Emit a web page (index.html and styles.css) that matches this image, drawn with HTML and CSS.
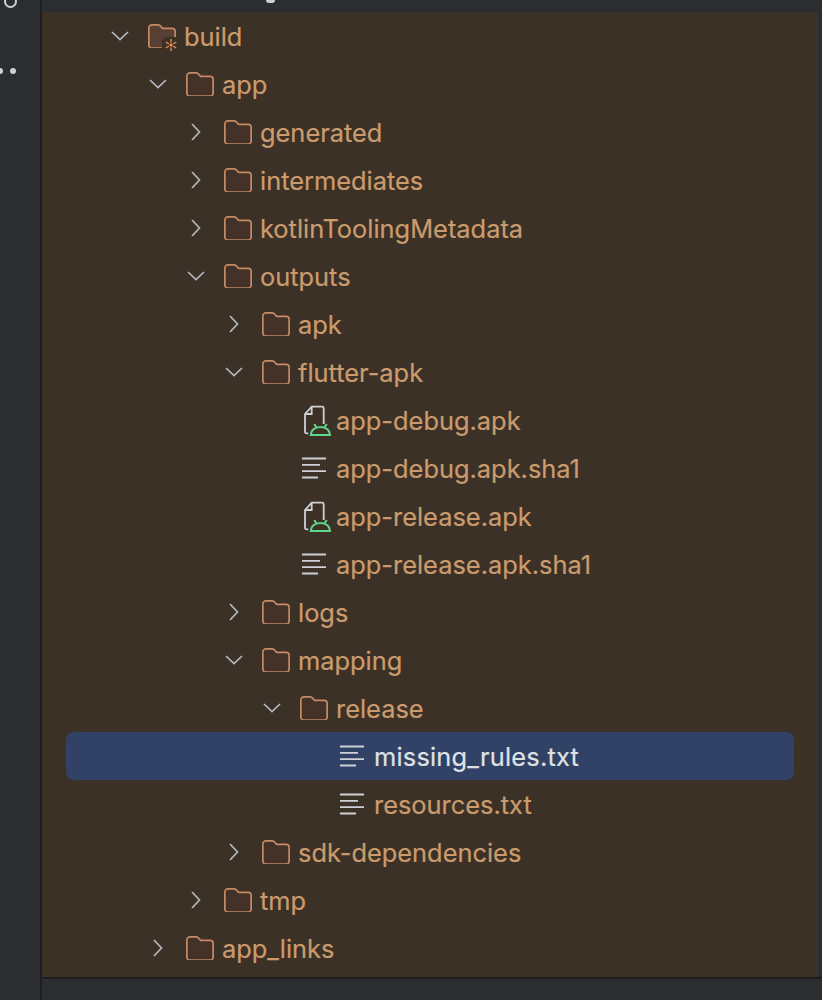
FILE: index.html
```html
<!DOCTYPE html>
<html lang="en">
<head>
<meta charset="utf-8">
<title>Project tree</title>
<link rel="stylesheet" href="styles.css">
</head>
<body>
<svg class="defs" width="0" height="0" aria-hidden="true">
  <defs>
    <symbol id="folder" viewBox="0 0 28 24"><path class="folder-shape" d="M.85 3.850a3 3 0 0 1 3-3h6.450a2 2 0 0 1 1.400.6l3 3h9.450a3 3 0 0 1 3 3v13.700a3 3 0 0 1-3 3H3.850a3 3 0 0 1-3-3z" stroke="#c58a66" stroke-width="1.700"/></symbol>
    <symbol id="down" viewBox="0 0 20 20"><path d="M2 6l8 7.500L18 6" fill="none" stroke="#b4b8bf" stroke-width="1.700"/></symbol>
    <symbol id="right" viewBox="0 0 20 20"><path d="M6 2l7.500 8L6 18" fill="none" stroke="#b4b8bf" stroke-width="1.700"/></symbol>
    <symbol id="text" viewBox="0 0 28 24"><path d="M2 2.500h24M2 8.800h18M2 15.200h24M2 21.500h16" fill="none" stroke="#ced0d6" stroke-width="1.800"/></symbol>
    <symbol id="apk" viewBox="0 0 32 32"><path d="M8.300 28.300H6.500a1.500 1.500 0 0 1-1.500-1.500V9l6.700-7.300h10.500a1.500 1.500 0 0 1 1.500 1.500V19M5 9h6.700V1.700" fill="none" stroke="#ced0d6" stroke-width="1.800"/><path d="M10.800 30h19.200c0-4.500-3.800-8-9.600-8s-9.600 3.500-9.600 8zM14.300 19l2.600 4.200M26.700 19l-2.700 4.200" fill="none" stroke="#5fd68a" stroke-width="2.100"/></symbol>
  </defs>
</svg>
<div class="window">
  <aside class="rail">
    <div class="rail-ring"></div>
    <div class="rail-dots"><span class="dot"></span><span class="dot"></span></div>
  </aside>
  <div class="main">
    <div class="topbar"><span class="descender"></span></div>
    <div class="tree">
      <div class="row l0"><svg class="chev"><use href="#down"/></svg><span class="icon build"><svg class="folder"><use href="#folder"/></svg><span class="badge"><svg viewBox="0 0 14 14" class="spark"><path d="M7 1v3.500M7 9.500V13M1.800 4l3 1.800M9.200 8.200l3 1.800M1.800 10l3-1.800M9.200 5.800l3-1.800" stroke="#e08a50" stroke-width="1.400"/><circle cx="7" cy="7" r="1.700" fill="#e08a50"/></svg></span></span><span class="name">build</span></div>
      <div class="row l1"><svg class="chev"><use href="#down"/></svg><svg class="folder"><use href="#folder"/></svg><span class="name">app</span></div>
      <div class="row l2"><svg class="chev"><use href="#right"/></svg><svg class="folder"><use href="#folder"/></svg><span class="name">generated</span></div>
      <div class="row l2"><svg class="chev"><use href="#right"/></svg><svg class="folder"><use href="#folder"/></svg><span class="name">intermediates</span></div>
      <div class="row l2"><svg class="chev"><use href="#right"/></svg><svg class="folder"><use href="#folder"/></svg><span class="name">kotlinToolingMetadata</span></div>
      <div class="row l2"><svg class="chev"><use href="#down"/></svg><svg class="folder"><use href="#folder"/></svg><span class="name">outputs</span></div>
      <div class="row l3"><svg class="chev"><use href="#right"/></svg><svg class="folder"><use href="#folder"/></svg><span class="name">apk</span></div>
      <div class="row l3"><svg class="chev"><use href="#down"/></svg><svg class="folder"><use href="#folder"/></svg><span class="name">flutter-apk</span></div>
      <div class="row l4"><span class="chev"></span><svg class="apk"><use href="#apk"/></svg><span class="name">app-debug.apk</span></div>
      <div class="row l4"><span class="chev"></span><svg class="folder"><use href="#text"/></svg><span class="name">app-debug.apk.sha1</span></div>
      <div class="row l4"><span class="chev"></span><svg class="apk"><use href="#apk"/></svg><span class="name">app-release.apk</span></div>
      <div class="row l4"><span class="chev"></span><svg class="folder"><use href="#text"/></svg><span class="name">app-release.apk.sha1</span></div>
      <div class="row l3"><svg class="chev"><use href="#right"/></svg><svg class="folder"><use href="#folder"/></svg><span class="name">logs</span></div>
      <div class="row l3"><svg class="chev"><use href="#down"/></svg><svg class="folder"><use href="#folder"/></svg><span class="name">mapping</span></div>
      <div class="row l4"><svg class="chev"><use href="#down"/></svg><svg class="folder"><use href="#folder"/></svg><span class="name">release</span></div>
      <div class="row l5 selected"><span class="chev"></span><svg class="folder"><use href="#text"/></svg><span class="name">missing_rules.txt</span></div>
      <div class="row l5"><span class="chev"></span><svg class="folder"><use href="#text"/></svg><span class="name">resources.txt</span></div>
      <div class="row l3"><svg class="chev"><use href="#right"/></svg><svg class="folder"><use href="#folder"/></svg><span class="name">sdk-dependencies</span></div>
      <div class="row l2"><svg class="chev"><use href="#right"/></svg><svg class="folder"><use href="#folder"/></svg><span class="name">tmp</span></div>
      <div class="row l1"><svg class="chev"><use href="#right"/></svg><svg class="folder"><use href="#folder"/></svg><span class="name">app_links</span></div>
    </div>
    <div class="bottombar"></div>
  </div>
</div>
</body>
</html>
```
FILE: styles.css
```css
* { box-sizing: border-box; }
html, body { margin: 0; height: 100%; overflow: hidden; background: #2b2d30; }
.defs { position: absolute; }
.window { display: flex; height: 1000px; }
.rail { width: 42px; flex: none; background: #2b2d30; border-right: 2px solid #1e1f22; }
.rail-ring { width: 13px; height: 13px; margin: -5px 0 0 4px; border: 2px solid #ced0d6; border-radius: 50%; }
.rail-dots { display: flex; gap: 7px; margin: 60px 0 0 -3px; }
.dot { width: 6px; height: 6px; border-radius: 50%; background: #ced0d6; }
.main { flex: 1; display: flex; flex-direction: column; min-width: 0; }
.topbar { height: 12px; flex: none; background: #2b2d30; padding-left: 224px; }
.descender { display: block; width: 9px; height: 3px; background: #ced0d6; border-radius: 0 0 5px 5px; }
.tree { height: 965px; flex: none; background: #3c3126; padding: 0 24px; font-family: Inter, "Liberation Sans", sans-serif; font-size: 25.4px; color: #cb9b6d; margin-right: 4px; }
.bottombar { flex: 1; background: #2b2d30; border-top: 2px solid #1e1f22; }
.row { height: 48px; display: flex; align-items: center; border-radius: 8px; }
.l0 { padding-left: 44px; }
.l1 { padding-left: 82px; }
.l2 { padding-left: 120px; }
.l3 { padding-left: 158px; }
.l4 { padding-left: 196px; }
.l5 { padding-left: 234px; }
.chev { width: 20px; height: 20px; flex: none; }
.folder { width: 28px; height: 24px; flex: none; margin-left: 18px; }
.folder-shape { fill: var(--folder-fill, #443229); }
.apk { width: 32px; height: 32px; flex: none; margin: 2px -4px 0 18px; }
.icon.build { position: relative; display: flex; flex: none; --folder-fill: #573f33; }
.badge { position: absolute; left: 32px; top: 13px; width: 17px; height: 15px; background: #3c3126; border-radius: 5px 0 0 0; }
.spark { width: 14px; height: 14px; display: block; margin: 1px 0 0 2px; }
.name { margin-left: 8px; white-space: nowrap; -webkit-text-stroke: 0.2px currentColor; }
.selected { background: #324166; color: #dfe1e5; }
.selected .name { letter-spacing: 0.2px; }
```
